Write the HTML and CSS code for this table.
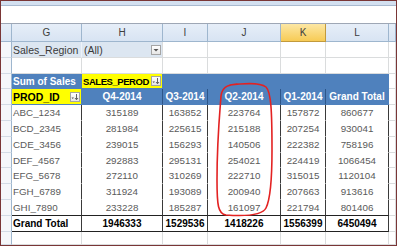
FILE: index.html
```html
<!DOCTYPE html>
<html lang="en">
<head>
    <meta charset="UTF-8">
    <title>Pivot - Sales</title>
    <link rel="stylesheet" href="styles.css">
</head>
<body>
    <div class="sheet">
        <div class="ribbon"></div>
        <div class="fbar"></div>

        <div class="row heads">
            <div class="c rh"></div>
            <div class="c ch">G</div>
            <div class="c ch">H</div>
            <div class="c ch">I</div>
            <div class="c ch">J</div>
            <div class="c ch sel">K</div>
            <div class="c ch">L</div>
            <div class="c ch"></div>
        </div>

        <div class="row r16">
            <div class="c rh"></div>
            <div class="c filt">Sales_Region</div>
            <div class="c filt split"><span class="lbl">(All)</span>
                <span class="btn"><svg width="8" height="8" viewBox="0 0 8 8"><path d="M1.5 3 L6.5 3 L4 5.5 Z" fill="#555"/></svg></span>
            </div>
            <div class="c"></div><div class="c"></div><div class="c"></div><div class="c"></div><div class="c"></div>
        </div>

        <div class="row r16">
            <div class="c rh"></div>
            <div class="c"></div><div class="c"></div><div class="c"></div><div class="c"></div><div class="c"></div><div class="c"></div><div class="c"></div>
        </div>

        <div class="row r15">
            <div class="c rh"></div>
            <div class="c pv left">Sum of Sales</div>
            <div class="c yl"><span class="lbl tight">SALES_PEROD</span>
                <span class="btn"><svg width="8" height="8" viewBox="0 0 8 8"><path d="M0.5 4.5 L3 4.5 L1.75 6 Z" fill="#555"/><path d="M5.5 1 V6.5 M4 5 L5.5 6.8 L7 5" stroke="#555" fill="none" stroke-width="0.9"/></svg></span>
            </div>
            <div class="c pv"></div><div class="c pv"></div><div class="c pv"></div><div class="c pv"></div>
            <div class="c"></div>
        </div>

        <div class="row r16">
            <div class="c rh"></div>
            <div class="c yl"><span class="lbl">PROD_ID</span>
                <span class="btn"><svg width="8" height="8" viewBox="0 0 8 8"><path d="M0.5 4.5 L3 4.5 L1.75 6 Z" fill="#555"/><path d="M5.5 1 V6.5 M4 5 L5.5 6.8 L7 5" stroke="#555" fill="none" stroke-width="0.9"/></svg></span>
            </div>
            <div class="c pv sep">Q4-2014</div>
            <div class="c pv sep">Q3-2014</div>
            <div class="c pv sep">Q2-2014</div>
            <div class="c pv sep">Q1-2014</div>
            <div class="c pv">Grand Total</div>
            <div class="c"></div>
        </div>

        <div class="row r16">
            <div class="c rh"></div>
            <div class="c d id">ABC_1234</div><div class="c d">315189</div><div class="c d">163852</div><div class="c d">223764</div><div class="c d">157872</div><div class="c d">860677</div>
            <div class="c blank"></div>
        </div>
        <div class="row r16">
            <div class="c rh"></div>
            <div class="c d id">BCD_2345</div><div class="c d">281984</div><div class="c d">225615</div><div class="c d">215188</div><div class="c d">207254</div><div class="c d">930041</div>
            <div class="c blank"></div>
        </div>
        <div class="row r16">
            <div class="c rh"></div>
            <div class="c d id">CDE_3456</div><div class="c d">239015</div><div class="c d">156293</div><div class="c d">140506</div><div class="c d">222382</div><div class="c d">758196</div>
            <div class="c blank"></div>
        </div>
        <div class="row r15">
            <div class="c rh"></div>
            <div class="c d id">DEF_4567</div><div class="c d">292883</div><div class="c d">295131</div><div class="c d">254021</div><div class="c d">224419</div><div class="c d">1066454</div>
            <div class="c blank"></div>
        </div>
        <div class="row r16">
            <div class="c rh"></div>
            <div class="c d id">EFG_5678</div><div class="c d">272110</div><div class="c d">310269</div><div class="c d">222710</div><div class="c d">315015</div><div class="c d">1120104</div>
            <div class="c blank"></div>
        </div>
        <div class="row r16">
            <div class="c rh"></div>
            <div class="c d id">FGH_6789</div><div class="c d">311924</div><div class="c d">193089</div><div class="c d">200940</div><div class="c d">207663</div><div class="c d">913616</div>
            <div class="c blank"></div>
        </div>
        <div class="row r16">
            <div class="c rh"></div>
            <div class="c d id end">GHI_7890</div><div class="c d end">233228</div><div class="c d end">185287</div><div class="c d end">161097</div><div class="c d end">221794</div><div class="c d end">801406</div>
            <div class="c"></div>
        </div>

        <div class="row r16">
            <div class="c rh"></div>
            <div class="c d id gt">Grand Total</div><div class="c d gt">1946333</div><div class="c d gt">1529536</div><div class="c d gt">1418226</div><div class="c d gt">1556399</div><div class="c d gt">6450494</div>
            <div class="c"></div>
        </div>

        <div class="row r13">
            <div class="c rh"></div>
            <div class="c"></div><div class="c"></div><div class="c"></div><div class="c"></div><div class="c"></div><div class="c"></div><div class="c"></div>
        </div>

        <!-- hand drawn circle round the Q2 column -->
        <svg class="mark" width="400" height="247" viewBox="0 0 400 247">
            <path d="M230 85 C245 83 261 83 266 87 C271 92 272 110 272 150 C272 180 270 200 266 208 C262 216 240 216 226 215 C218 214 217 205 217 180 C217 140 220 110 221 96 C222 88 226 85 237 84"
                  fill="none" stroke="#e32222" stroke-width="1.6" stroke-linecap="round"/>
        </svg>
    </div>
</body>
</html>
```

FILE: styles.css
```css
body {
    margin: 0;
    background: #fff;
    font-family: "Liberation Sans", Arial, sans-serif;
}
.sheet {
    position: relative;
    width: 397px;
    height: 246px;
    box-sizing: border-box;
    border: 1px solid #7a3636;
    background: #fff;
    overflow: hidden;
}
.ribbon {
    height: 4px;
    background: #d3e0f0;
    border-bottom: 1px solid #a9bad0;
}
.fbar {
    height: 17px;
    background: #fff;
    border-bottom: 1px solid #9ea7b5;
}
.row {
    display: grid;
    grid-template-columns: 11px 70px 81px 45px 73px 45px 63px 7px;
}
.heads { height: 18px; }
.r16 { height: 16px; }
.r15 { height: 15px; }
.r13 { height: 13px; }

.c {
    box-sizing: border-box;
    min-width: 0;
    display: flex;
    align-items: center;
    overflow: hidden;
    white-space: nowrap;
    border-right: 1px solid #dadcdd;
    border-bottom: 1px solid #dadcdd;
    font-size: 9.8px;
    color: #5a5a5a;
}
.lbl {
    flex: 1;
    min-width: 0;
    overflow: hidden;
}
.lbl.tight {
    font-size: 9.5px;
    letter-spacing: -0.45px;
}
.rh {
    background: #f5f7fa;
    border-right-color: #9eb6ce;
    border-bottom-color: #d3dbe5;
}
.heads .rh {
    background: linear-gradient(#e6eef8, #d8e4f3);
    border-bottom-color: #9eb6ce;
}
.ch {
    justify-content: center;
    background: linear-gradient(#e6eef8, #d8e4f3);
    border-right-color: #9eb6ce;
    border-bottom-color: #9eb6ce;
    color: #3d3d3d;
    font-size: 10px;
}
.ch.sel {
    background: linear-gradient(#fce7a4, #f7cb55);
    border-right-color: #c29a3c;
    border-bottom-color: #c29a3c;
}
.filt {
    background: #dce6f1;
    border-right-color: #eef3f9;
    color: #3a3a3a;
    font-size: 10.5px;
    padding-left: 1px;
}
.split {
    padding-left: 2px;
    border-right-color: #dadcdd;
}
.btn {
    flex: none;
    width: 10px;
    height: 10px;
    box-sizing: border-box;
    margin-right: 1px;
    border: 1px solid #a5a5a5;
    background: linear-gradient(#ffffff, #e6e6e6);
    display: flex;
    align-items: center;
    justify-content: center;
}
.pv {
    justify-content: center;
    background: #4f81bd;
    border-right-color: #4f81bd;
    border-bottom-color: #4f81bd;
    color: #fff;
    font-weight: bold;
    font-size: 10px;
}
.pv.left {
    justify-content: flex-start;
    padding-left: 1px;
}
.pv.sep {
    border-right-color: #2d5689;
}
.yl {
    background: #ffff00;
    border-right-color: #4f81bd;
    border-bottom-color: #4f81bd;
    color: #000;
    font-weight: bold;
    font-size: 10.5px;
    padding-left: 1px;
}
.d {
    justify-content: center;
    background: #fff;
    border-right-color: #3a3a3a;
    border-bottom-color: #fff;
}
.d.id {
    justify-content: flex-start;
    padding-left: 1px;
}
.d.end,
.gt {
    border-bottom-color: #222;
}
.gt {
    color: #000;
    font-weight: bold;
    font-size: 10px;
}
.blank {
    border-bottom-color: #dadcdd;
}
.mark {
    position: absolute;
    left: -1px;
    top: -1px;
    pointer-events: none;
}
```
